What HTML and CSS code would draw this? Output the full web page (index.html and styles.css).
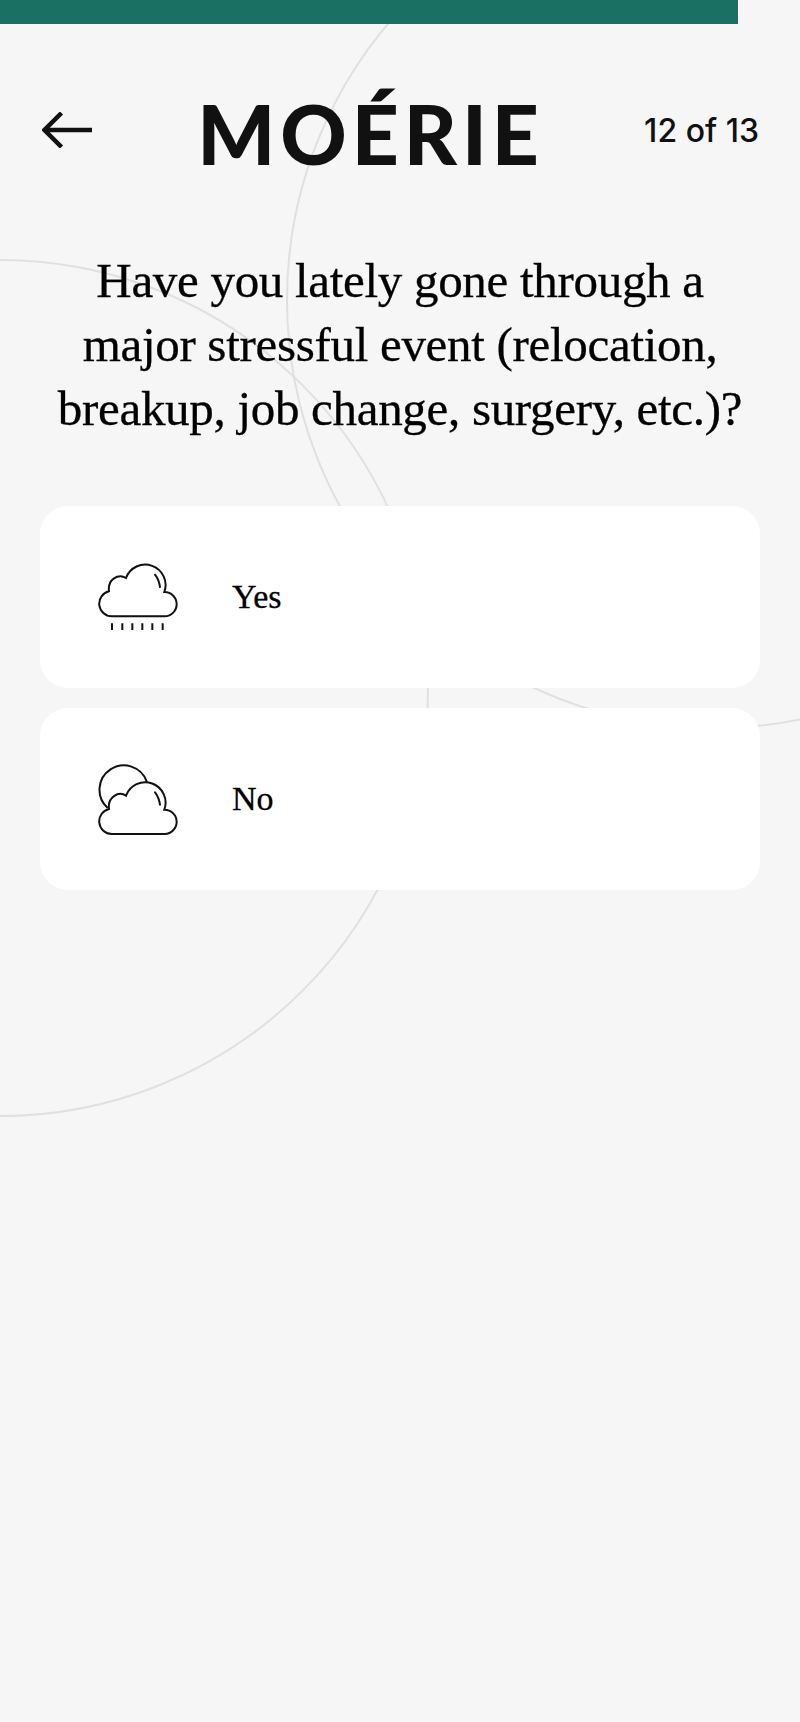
FILE: index.html
```html
<!DOCTYPE html>
<html lang="en">
  <head>
    <meta charset="UTF-8" />
    <meta name="viewport" content="width=device-width, initial-scale=1.0" />
    <title>Moérie Quiz</title>
    <link rel="stylesheet" href="styles.css">
  </head>
  <body>
    <div class="page">
      <div class="circle circle-left"></div>
      <div class="circle circle-right"></div>

      <div class="progress">
        <div class="progress-fill" style="width: 92.3%"></div>
      </div>

      <header class="top-bar">
        <a href="#" class="back" aria-label="Back">
          <svg width="50" height="36" viewBox="0 0 50 36" fill="none" stroke="#111" stroke-width="4.5">
            <path d="M50 18H3" />
            <path d="M19.5 1 2.5 18l17 17" />
          </svg>
        </a>
        <div class="logo">MOÉRIE</div>
        <div class="step">12 of 13</div>
      </header>

      <h1 class="question">Have you lately gone through a<br />major stressful event (relocation,<br />breakup, job change, surgery, etc.)?</h1>

      <div class="options">
        <button type="button" class="option">
          <svg class="option-icon" width="80" height="68" viewBox="84 70 240 204" fill="none" stroke="#111" stroke-width="6" stroke-linecap="round">
            <path d="M125 230H284A35 35 0 0 0 283 157A58 58 0 1 0 168 115C145 100 112 120 117 155A38 38 0 0 0 125 230Z" />
            <path d="M255 105C263 115 268 128 270 142" />
            <path d="M126 251V271M157 251V271M187 251V271M217 251V271M247 251V271M278 251V271" stroke-linecap="butt" />
          </svg>
          <span class="option-label">Yes</span>
        </button>
        <button type="button" class="option">
          <svg class="option-icon" width="80" height="71" viewBox="84 673 240 213" fill="none" stroke="#111" stroke-width="6" stroke-linecap="round">
            <path d="M111 803A73 73 0 1 1 230 725" />
            <path d="M125 883H284A35 35 0 0 0 283 810A58 58 0 1 0 168 768C145 753 112 773 117 808A38 38 0 0 0 125 883Z" />
            <path d="M255 758C263 768 268 781 270 795" />
          </svg>
          <span class="option-label">No</span>
        </button>
      </div>
    </div>
  </body>
</html>
```
FILE: styles.css
```css
body {
  font-family: "Liberation Serif", serif;
  background-color: #f6f6f6;
  color: #000;
  margin: 0;
}
.page {
  position: relative;
  height: 100vh;
  overflow: hidden;
}
.circle {
  position: absolute;
  width: 858px;
  height: 858px;
  border: 2px solid #e0e0e0;
  border-radius: 50%;
  box-sizing: border-box;
}
.circle-left {
  left: -429px;
  top: 259px;
}
.circle-right {
  left: 286px;
  top: -129px;
}
.progress {
  position: relative;
  height: 24px;
}
.progress-fill {
  height: 100%;
  background-color: #1a7062;
}
.top-bar {
  position: relative;
  display: flex;
  justify-content: space-between;
  align-items: flex-start;
  padding: 0 41px 0 42px;
  margin-top: 60px;
  height: 82px;
}
.back {
  display: block;
  margin-top: 28px;
  height: 36px;
}
.logo {
  font-family: Lato, sans-serif;
  font-weight: 900;
  font-size: 82px;
  line-height: 82px;
  letter-spacing: 5px;
  margin-top: 8px;
  margin-right: -5px;
  color: #111;
}
.step {
  font-family: Inter, sans-serif;
  font-weight: 500;
  font-size: 32px;
  line-height: 40px;
  margin-top: 27px;
  color: #111;
}
.question {
  position: relative;
  font-weight: 400;
  font-size: 49px;
  line-height: 64px;
  text-align: center;
  margin: 83px 0 0;
  letter-spacing: -0.3px;
  -webkit-text-stroke: 0.3px #000;
}
.options {
  position: relative;
  display: flex;
  flex-direction: column;
  gap: 20px;
  padding: 0 40px;
  margin-top: 65px;
}
.option {
  display: flex;
  align-items: center;
  gap: 54px;
  height: 182px;
  padding: 0 0 0 58px;
  background-color: #fff;
  border: none;
  border-radius: 28px;
  font-family: inherit;
  color: inherit;
  cursor: pointer;
}
.option-icon {
  flex-shrink: 0;
}
.option-label {
  font-size: 34px;
  -webkit-text-stroke: 0.3px #000;
}
```
